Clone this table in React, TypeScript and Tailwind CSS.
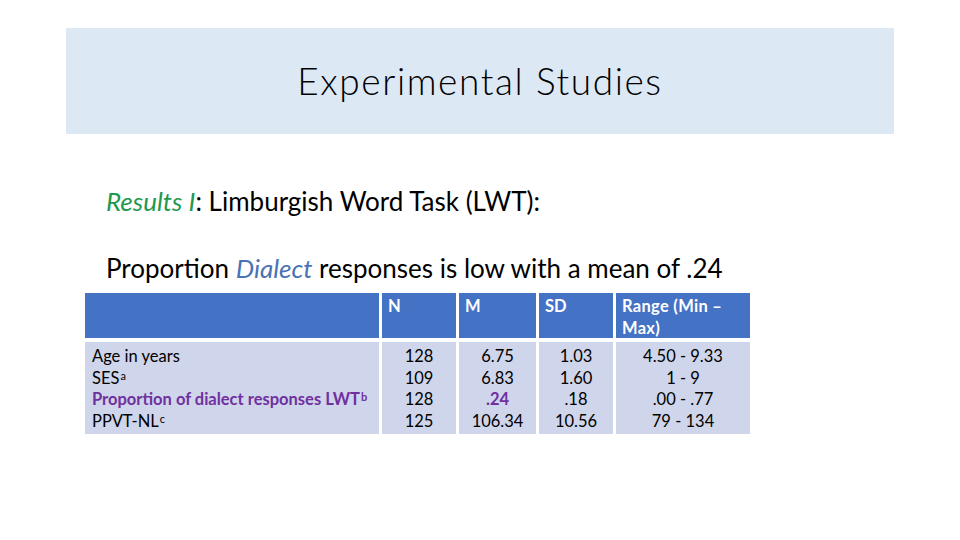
import React from 'react';

const rows = [
  { label: 'Age in years', sup: '', n: '128', m: '6.75', sd: '1.03', range: '4.50 - 9.33' },
  { label: 'SES', sup: 'a', n: '109', m: '6.83', sd: '1.60', range: '1 - 9' },
  { label: 'Proportion of dialect responses LWT', sup: 'b', n: '128', m: '.24', sd: '.18', range: '.00 - .77', hl: true },
  { label: 'PPVT-NL', sup: 'c', n: '125', m: '106.34', sd: '10.56', range: '79 - 134' },
];

export default function App() {
  return (
    <div className="w-[960px] h-[540px] bg-white relative overflow-hidden" style={{ fontFamily: 'Lato, "Open Sans", sans-serif' }}>
      {/* Title band */}
      <div className="ml-[66px] mt-[28px] w-[828px] h-[106px] bg-[#dde8f5] flex items-center justify-center">
        <h1 className="text-[37px] font-light text-black tracking-[1.6px] leading-none -mt-[2px]">Experimental Studies</h1>
      </div>

      {/* Body text */}
      <div className="ml-[106px] mt-[52px] text-[26px] leading-[30px] text-black">
        <p>
          <span className="italic text-[#1f9a4f]">Results I</span>: Limburgish Word Task (LWT):
        </p>
        <p className="mt-[37px]">
          Proportion <span className="italic text-[#4a72b5]">Dialect</span> responses is low with a mean of .24
        </p>
      </div>

      {/* Table */}
      <div className="ml-[85px] mt-[10px] grid grid-cols-[294px_74px_77px_74px_134px] gap-x-[3px] gap-y-[4px] text-[16.5px]">
        <div className="bg-[#4472c4] h-[45px]" />
        {['N', 'M', 'SD'].map((h) => (
          <div key={h} className="bg-[#4472c4] h-[45px] px-[6px] pt-[2px] text-white font-bold leading-[22px]">
            {h}
          </div>
        ))}
        <div className="bg-[#4472c4] h-[45px] px-[6px] pt-[2px] text-white font-bold leading-[22px] tracking-[0.3px]">
          Range (Min –<br />Max)
        </div>

        <div className="bg-[#cfd5ea] h-[92px] pl-[7px] pt-[4px] leading-[21.7px]">
          {rows.map((r) => (
            <div key={r.label} className={r.hl ? 'text-[#7030a0] font-bold' : 'text-black'}>
              {r.label}
              {r.sup && <span className="relative -top-[4px] text-[11px] leading-none ml-[1px]">{r.sup}</span>}
            </div>
          ))}
        </div>
        {(['n', 'm', 'sd', 'range'] as const).map((k) => (
          <div key={k} className="bg-[#cfd5ea] h-[92px] pt-[4px] leading-[21.7px] text-center">
            {rows.map((r) => (
              <div key={r.label} className={r.hl && k === 'm' ? 'text-[#7030a0] font-bold' : 'text-black'}>
                {r[k]}
              </div>
            ))}
          </div>
        ))}
      </div>
    </div>
  );
}
